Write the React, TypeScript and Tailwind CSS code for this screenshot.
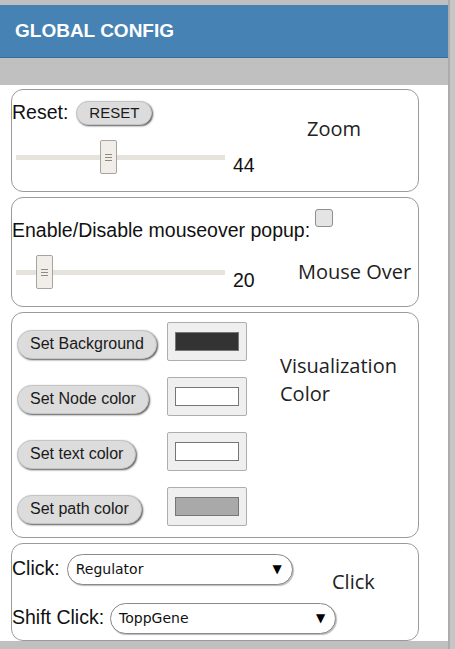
import React from "react";

const arial = { fontFamily: '"Liberation Sans", Arial, sans-serif' };
const open = { fontFamily: '"Open Sans", "Noto Sans", sans-serif' };
const deja = { fontFamily: '"DejaVu Sans", Verdana, sans-serif' };

function Slider({ thumbLeft, value, label }: { thumbLeft: number; value: string; label?: string }) {
  return (
    <div className="flex items-center">
      <div className="flex items-end">
        <div className="relative w-[209px] h-[34px] flex items-center">
          <div className="w-full h-[5px] bg-[#e6e2dc]" />
          <div
            className="absolute top-0 w-[17px] h-[34px] bg-[#f1eee9] border border-[#a8a39d] rounded-[2px] flex flex-col items-center justify-center gap-[2px]"
            style={{ left: thumbLeft }}
          >
            <div className="w-[7px] h-px bg-[#8d8984]" />
            <div className="w-[7px] h-px bg-[#8d8984]" />
            <div className="w-[7px] h-px bg-[#8d8984]" />
          </div>
        </div>
        <div className="w-[73px] pl-[8px] text-[19.5px] leading-[20px] mb-[-1px] text-[#111]" style={arial}>
          {value}
        </div>
      </div>
      {label && (
        <div className="text-[20px] leading-[28px] text-[#222] whitespace-nowrap" style={open}>
          {label}
        </div>
      )}
    </div>
  );
}

function PillButton({ children, h, size }: { children: React.ReactNode; h: string; size: string }) {
  return (
    <div
      className={`${h} ${size} px-[12px] flex items-center rounded-full bg-[#dcdcdc] border border-[#c4c4c4] shadow-[1px_1px_2px_#555] text-[#1a1a1a] whitespace-nowrap`}
      style={arial}
    >
      {children}
    </div>
  );
}

function Swatch({ color }: { color: string }) {
  return (
    <div className="w-[80px] h-[39px] border border-[#adadad] bg-[#efefef] rounded-[2px] flex items-center justify-center">
      <div className="w-[64px] h-[19px] border border-[#767676]" style={{ background: color }} />
    </div>
  );
}

function Select({ w, text }: { w: string; text: string }) {
  return (
    <div
      className={`${w} shrink-0 h-[31px] rounded-full bg-white border border-[#8a8a8a] shadow-[1px_1px_1px_#bbb] flex items-center justify-between pl-[8px] pr-[10px]`}
    >
      <span className="text-[14px] text-[#111]" style={deja}>
        {text}
      </span>
      <span className="text-[12px] text-black" style={deja}>
        ▼
      </span>
    </div>
  );
}

export default function App() {
  return (
    <div className="w-[455px] h-[649px] bg-[#c0c0c0] overflow-hidden flex" style={arial}>
      <div className="w-[448px] shrink-0 flex flex-col">
        <div className="h-[5px]" />
        <div className="h-[53px] bg-[#4682b4] border-b border-[#3a6c95] flex items-center pl-[15px]">
          <span className="text-white font-bold text-[19px]" style={arial}>
            GLOBAL CONFIG
          </span>
        </div>
        <div className="h-[27px]" />
        <div className="h-[556px] bg-white pt-[4px] pl-[11px] flex flex-col gap-[5px]">
          {/* Card 1 */}
          <div className="w-[408px] h-[104px] border border-[#9a9a9a] rounded-[12px] flex">
            <div className="w-[295px] flex flex-col">
              <div className="mt-[10px] flex items-center h-[26px]">
                <span className="text-[19.5px] text-[#111] mr-[8px]">Reset:</span>
                <PillButton h="h-[24px]" size="text-[15px]">RESET</PillButton>
              </div>
              <div className="mt-[14px] ml-[4px]">
                <Slider thumbLeft={84} value="44" />
              </div>
            </div>
            <div className="mt-[25px] text-[20px] leading-[28px] text-[#222]" style={open}>
              Zoom
            </div>
          </div>
          {/* Card 2 */}
          <div className="w-[408px] h-[110px] border border-[#9a9a9a] rounded-[12px] flex flex-col">
            <div className="mt-[11px] flex items-start">
              <span className="mt-[10px] text-[19.5px] leading-[22px] text-[#111] whitespace-nowrap">
                Enable/Disable mouseover popup:
              </span>
              <div className="ml-[5px] w-[18px] h-[18px] rounded-[3px] border border-[#8f8f8f] bg-[#e4e4e4]" />
            </div>
            <div className="mt-[14px] ml-[4px]">
              <Slider thumbLeft={20} value="20" label="Mouse Over" />
            </div>
          </div>
          {/* Card 3 */}
          <div className="w-[408px] h-[227px] border border-[#9a9a9a] rounded-[12px] flex">
            <div className="w-[268px] pt-[9px] pl-[5px] flex flex-col gap-[16px]">
              {[
                ["Set Background", "#333333"],
                ["Set Node color", "#ffffff"],
                ["Set text color", "#ffffff"],
                ["Set path color", "#a9a9a9"],
              ].map(([t, c]) => (
                <div key={t} className="flex items-end">
                  <div className="w-[150px] pb-[2px]">
                    <div className="inline-flex">
                      <PillButton h="h-[29px]" size="text-[16px]">{t}</PillButton>
                    </div>
                  </div>
                  <Swatch color={c} />
                </div>
              ))}
            </div>
            <div className="mt-[39px] text-[20px] leading-[28px] text-[#222]" style={open}>
              Visualization
              <br />
              Color
            </div>
          </div>
          {/* Card 4 */}
          <div className="w-[408px] h-[99px] border border-[#9a9a9a] rounded-[12px] flex">
            <div className="w-[320px] shrink-0 pt-[10px] flex flex-col gap-[18px]">
              <div className="flex items-center whitespace-nowrap">
                <span className="text-[19.5px] text-[#111] mr-[7px]">Click:</span>
                <Select w="w-[226px]" text="Regulator" />
              </div>
              <div className="flex items-center whitespace-nowrap">
                <span className="text-[19.5px] text-[#111] mr-[6px]">Shift Click:</span>
                <Select w="w-[226px]" text="ToppGene" />
              </div>
            </div>
            <div className="mt-[24px] text-[20px] leading-[28px] text-[#222]" style={open}>
              Click
            </div>
          </div>
        </div>
      </div>
      <div className="w-[7px] shrink-0 border-l-2 border-[#adadad] bg-[#c6c6c6]" />
    </div>
  );
}
